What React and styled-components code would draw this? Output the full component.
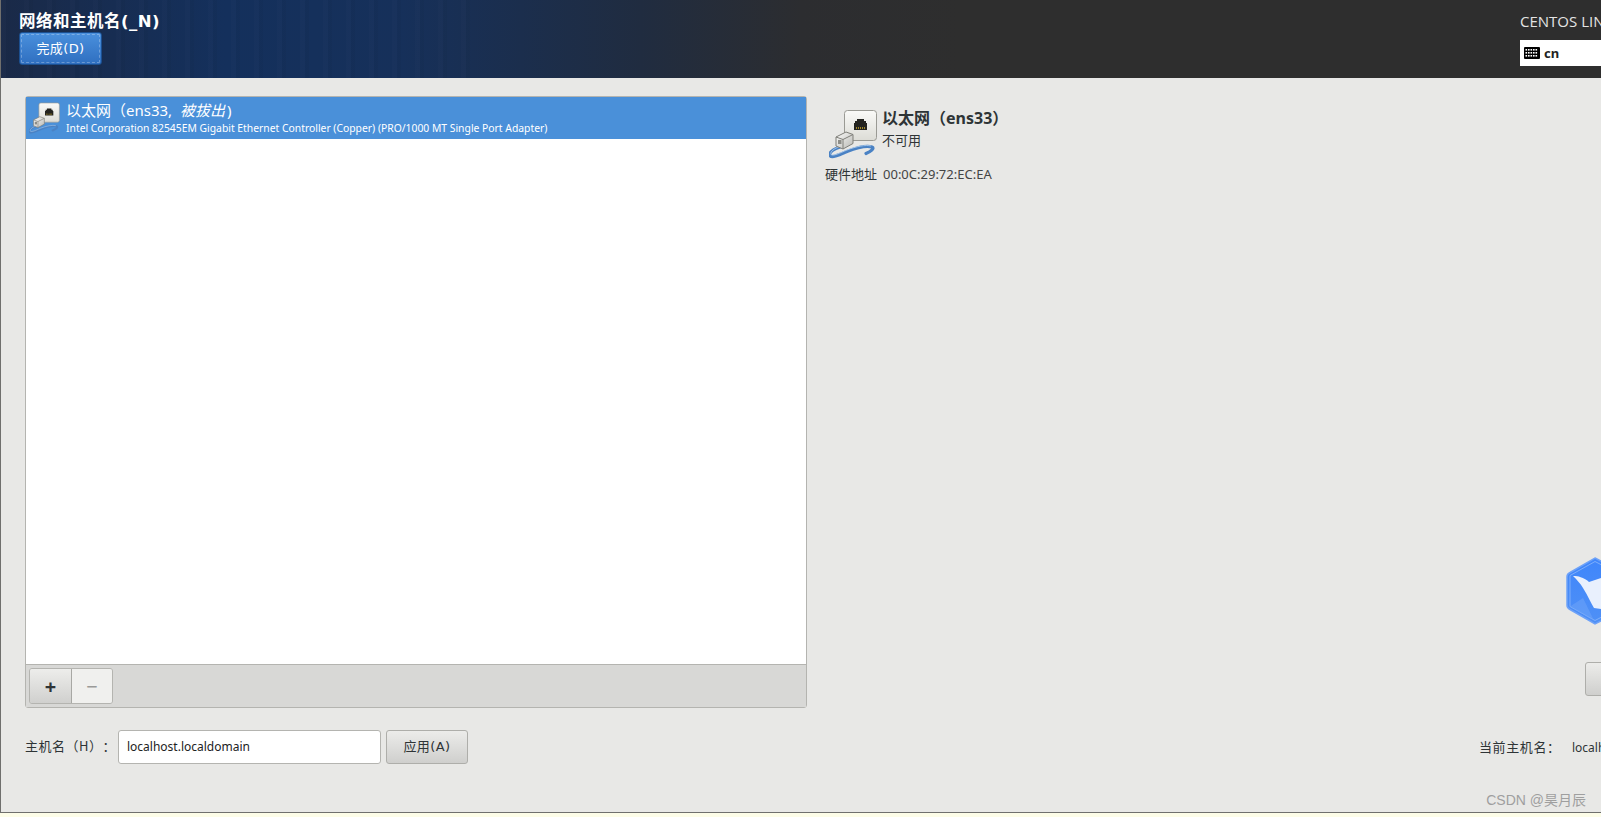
import styled, { createGlobalStyle } from "styled-components";
import { useState } from "react";

const GlobalStyle = createGlobalStyle`
  html, body {
    margin: 0;
    padding: 0;
    background: #fdfde8;
  }
  body {
    font-family: "Liberation Sans", "Noto Sans", "Noto Sans CJK SC", sans-serif;
    text-spacing-trim: space-all;
    overflow: hidden;
  }
  * {
    box-sizing: border-box;
  }
`;

function PortIcon({ small }) {
  const size = small ? 32 : 50;
  const plate = small ? "plateS" : "plateL";
  const plug = small ? "plugS" : "plugL";
  return (
    <svg width={size} height={size} viewBox="0 0 50 50">
      <defs>
        <linearGradient id={plate} x1="0" y1="0" x2="0" y2="1">
          <stop offset="0" stopColor="#fafaf8" />
          <stop offset="1" stopColor="#dcdcd6" />
        </linearGradient>
        <linearGradient id={plug} x1="0" y1="0" x2="1" y2="1">
          <stop offset="0" stopColor="#fbfbfa" />
          <stop offset="1" stopColor="#b9b9b4" />
        </linearGradient>
      </defs>
      <rect x="15.5" y="1.5" width="32" height="30" rx="3" fill={`url(#${plate})`} stroke="#9a9a94" />
      <path d="M28 10h7v2h2v2h1v7H25v-7h1v-2h2z" fill="#23231f" />
      <path d="M27 19h9" stroke="#c9a92c" strokeWidth="1.4" strokeDasharray="1 1" />
      <path d="M11 38C5 40 0 43 1 46.5c1.5 3 9-.5 17-4 9-3.5 20-6 25-4.5 3 1.2-1 4.5-6 6.5" fill="none" stroke="#4a82c4" strokeWidth="3.2" strokeLinecap="round" />
      <path d="M11 37.5C5 39.5 1 42.5 2 45.5c2 2 9-1.5 16-4.5 9-3.5 19-5.5 24-4" fill="none" stroke="#b5d0ee" strokeWidth="0.8" />
      <path d="M7 28l10-5 7 2.500v9L14 40l-7-3z" fill={`url(#${plug})`} stroke="#7f7f79" />
      <path d="M7 28l7 2.500V40M14 30.500l10-5" fill="none" stroke="#7f7f79" />
      <rect x="9" y="31" width="3.5" height="4" fill="#8d8d88" />
    </svg>
  );
}

function KeyboardIcon() {
  return (
    <svg width="16" height="12" viewBox="0 0 16 12">
      <rect width="16" height="12" rx="1" fill="#000" />
      {[2, 5, 8].map((y) =>
        [1.5, 4, 6.5, 9, 11.5].map((x) => (
          <rect key={`${x}-${y}`} x={x} y={y} width="1.6" height="1.6" fill="#fff" />
        ))
      )}
    </svg>
  );
}

function BirdBadge() {
  return (
    <svg width="70" height="68" viewBox="0 0 70 68">
      <defs>
        <linearGradient id="hexFill" x1="0" y1="0" x2="0" y2="1">
          <stop offset="0" stopColor="#3f86fb" />
          <stop offset="1" stopColor="#4f90f6" />
        </linearGradient>
      </defs>
      <path d="M29 1 58 16a5 5 0 0 1 3 5v26a5 5 0 0 1-3 5L29 67 4 52.500a5 5 0 0 1-3-5V20.500a5 5 0 0 1 3-5z" fill="url(#hexFill)" stroke="#6ea2f8" strokeWidth="1.5" />
      <path d="M29 4.500 56 18.500V49.500L29 63.500 4 49.500V18.500z" fill="none" stroke="#8db8fa" strokeWidth="0.8" />
      <path d="M4 49.500 17 41l11 22.500z" fill="#6aa2f8" opacity="0.6" />
      <path d="M7 19c3 0 6 0 7 1 4 1 7 3 9 5 4-1 8-3 12-4 6 0 12 4 16 9v24L36 52l-8-1c-3-5-6-12-11-20-3-5-6-8-10-12z" fill="#e9f0fd" />
    </svg>
  );
}

export default function App() {
  const [hostname, setHostname] = useState("localhost.localdomain");

  return (
    <>
      <GlobalStyle />
      <Screen>
        <Header>
          <HeaderLeft>
            <PageTitle>网络和主机名(_N)</PageTitle>
            <DoneButton>完成(D)</DoneButton>
          </HeaderLeft>
          <HeaderRight>
            <ProductName>CENTOS LINUX 7 安装</ProductName>
            <KeyboardBox>
              <KeyboardIcon />
              <span>cn</span>
            </KeyboardBox>
          </HeaderRight>
        </Header>

        <Content>
          <Columns>
            <ListPanel>
              <DeviceList>
                <DeviceRow>
                  <PortIcon small />
                  <DeviceText>
                    <DeviceName>
                      以太网（ens33, <em>被拔出</em>)
                    </DeviceName>
                    <DeviceModel>
                      Intel Corporation 82545EM Gigabit Ethernet Controller (Copper) (PRO/1000 MT Single Port Adapter)
                    </DeviceModel>
                  </DeviceText>
                </DeviceRow>
              </DeviceList>
              <ListToolbar>
                <ToolGroup>
                  <ToolButton>+</ToolButton>
                  <ToolButton $disabled>−</ToolButton>
                </ToolGroup>
              </ListToolbar>
            </ListPanel>

            <DetailPanel>
              <DetailHead>
                <PortIcon />
                <div>
                  <DetailTitle>以太网（ens33）</DetailTitle>
                  <DetailStatus>不可用</DetailStatus>
                </div>
              </DetailHead>
              <DetailRow>
                <DetailLabel>硬件地址</DetailLabel>
                <DetailValue>00:0C:29:72:EC:EA</DetailValue>
              </DetailRow>
              <ConfigureRow>
                <GreyButton $wide>配置(O)...</GreyButton>
              </ConfigureRow>
            </DetailPanel>
          </Columns>

          <HostRow>
            <HostLeft>
              <HostLabel>主机名（H）：</HostLabel>
              <HostInput value={hostname} onChange={(e) => setHostname(e.target.value)} />
              <GreyButton>应用(A)</GreyButton>
            </HostLeft>
            <HostRight>
              <CurrentLabel>当前主机名：</CurrentLabel>
              <span>localhost.localdomain</span>
            </HostRight>
          </HostRow>

          <BadgeSpot>
            <BirdBadge />
          </BadgeSpot>
          <Watermark>CSDN @昊月辰</Watermark>
        </Content>
      </Screen>
    </>
  );
}

const Screen = styled.div`
  width: 1601px;
  height: 813px;
  display: flex;
  flex-direction: column;
  overflow: hidden;
  background: #e8e8e6;
  border-left: 1px solid #6f6f6d;
  border-bottom: 1px solid #6f6f6d;
`;

const Header = styled.header`
  height: 78px;
  flex: none;
  display: flex;
  justify-content: space-between;
  color: #fff;
  background:
    repeating-linear-gradient(90deg, rgba(255, 255, 255, 0.012) 0 5px, rgba(0, 0, 0, 0.03) 5px 9px, transparent 9px 23px) 0 0 / 480px 100% no-repeat,
    linear-gradient(90deg, #1a2a48 0%, #14305c 14%, #16305a 25%, #202c40 40%, #2c2d30 50%, #2e2e2e 60%, #2e2e2e 100%);
`;

const HeaderLeft = styled.div`
  padding: 11px 0 0 18px;
`;

const PageTitle = styled.h1`
  margin: 0;
  height: 22px;
  font-family: "DejaVu Sans", "Noto Sans CJK SC", sans-serif;
  font-size: 16.5px;
  line-height: 22px;
  font-weight: 700;
  letter-spacing: 0.5px;
  white-space: nowrap;
`;

const DoneButton = styled.button`
  display: block;
  width: 83px;
  height: 33px;
  margin-top: -1px;
  padding: 0 0 3px;
  font-family: "DejaVu Sans", "Noto Sans CJK SC", sans-serif;
  font-size: 13px;
  letter-spacing: 0.4px;
  color: #fff;
  border: 1px solid #1c4f8f;
  border-radius: 3px;
  outline: 1px dashed rgba(255, 255, 255, 0.28);
  outline-offset: -3px;
  background: linear-gradient(180deg, #4a90dd 0%, #2f6fc0 100%);
`;

const HeaderRight = styled.div`
  width: 81px;
  flex: none;
  padding-top: 11px;
  white-space: nowrap;
`;

const ProductName = styled.div`
  height: 29px;
  font-family: "Open Sans", "Noto Sans", "Noto Sans CJK SC", sans-serif;
  font-size: 15px;
  line-height: 20px;
  color: #e4e4e4;
`;

const KeyboardBox = styled.div`
  width: 81px;
  height: 26px;
  display: flex;
  align-items: center;
  gap: 4px;
  padding-left: 4px;
  background: #fff;
  color: #222;
  font-family: "Noto Sans", sans-serif;
  font-size: 13px;
  font-weight: 700;
`;

const Content = styled.main`
  position: relative;
  flex: 1;
  min-height: 0;
  padding: 18px 0 0 24px;
`;

const Columns = styled.div`
  display: flex;
  height: 612px;
`;

const ListPanel = styled.section`
  width: 782px;
  flex: none;
  display: flex;
  flex-direction: column;
  border: 1px solid #b4b4b0;
  border-radius: 3px;
`;

const DeviceList = styled.div`
  flex: 1;
  background: #fff;
  border-bottom: 1px solid #b4b4b0;
`;

const DeviceRow = styled.div`
  height: 42px;
  display: flex;
  align-items: center;
  gap: 5px;
  padding-left: 3px;
  background: #4a90d9;
  color: #fff;
`;

const DeviceText = styled.div`
  display: flex;
  flex-direction: column;
  padding-bottom: 2px;
`;

const DeviceName = styled.div`
  font-family: "Noto Sans", "Noto Sans CJK SC", sans-serif;
  font-size: 15px;
  line-height: 21px;
  word-spacing: 4px;
  em {
    font-style: italic;
    margin-right: 2px;
  }
`;

const DeviceModel = styled.div`
  font-family: "Noto Sans", sans-serif;
  font-size: 10.35px;
  line-height: 14px;
`;

const ListToolbar = styled.div`
  height: 42px;
  flex: none;
  padding: 3px;
  background: #d8d8d6;
`;

const ToolGroup = styled.div`
  display: inline-flex;
  height: 36px;
  border: 1px solid #b4b4b0;
  border-radius: 3px;
  overflow: hidden;
`;

const ToolButton = styled.button`
  width: ${(p) => (p.$disabled ? "40px" : "42px")};
  padding: 0;
  border: 0;
  font-family: "Noto Sans", sans-serif;
  font-size: 20px;
  font-weight: ${(p) => (p.$disabled ? 400 : 700)};
  color: ${(p) => (p.$disabled ? "#9a9a98" : "#2e3436")};
  background: ${(p) => (p.$disabled ? "#f0f0ee" : "linear-gradient(180deg, #ededeb, #d0d0ce)")};
  border-right: ${(p) => (p.$disabled ? "0" : "1px solid #a8a8a4")};
`;

const DetailPanel = styled.section`
  width: 900px;
  flex: none;
  display: flex;
  flex-direction: column;
  padding: 13px 0 0 18px;
`;

const DetailHead = styled.div`
  display: flex;
  gap: 3px;
  margin-left: 4px;
  height: 55px;
`;

const DetailTitle = styled.div`
  margin-top: -1px;
  font-family: "Noto Sans", "Noto Sans CJK SC", sans-serif;
  font-size: 16px;
  font-weight: 700;
  line-height: 20px;
  color: #2e3436;
`;

const DetailStatus = styled.div`
  margin-top: 2px;
  font-family: "Noto Sans CJK SC", sans-serif;
  font-size: 13px;
  line-height: 20px;
  color: #2e3436;
`;

const DetailRow = styled.div`
  display: flex;
  gap: 6px;
  margin-top: 1px;
  font-size: 13px;
  line-height: 18px;
  color: #2e3436;
`;

const DetailLabel = styled.span`
  font-family: "Noto Sans CJK SC", sans-serif;
`;

const DetailValue = styled.span`
  font-family: "Noto Sans", sans-serif;
  color: #444;
`;

const ConfigureRow = styled.div`
  margin-top: auto;
  margin-bottom: 12px;
  padding-left: 760px;
`;

const GreyButton = styled.button`
  width: ${(p) => (p.$wide ? "100px" : "82px")};
  height: 34px;
  padding: 0 0 3px;
  flex: none;
  font-family: "DejaVu Sans", "Noto Sans CJK SC", sans-serif;
  font-size: 13px;
  letter-spacing: 0.4px;
  color: #2e3436;
  border: 1px solid #aeaeaa;
  border-radius: 3px;
  background: linear-gradient(180deg, #ececea, #cfcfcd);
`;

const HostRow = styled.div`
  display: flex;
  justify-content: space-between;
  align-items: center;
  width: 1680px;
  margin-top: 22px;
  height: 34px;
`;

const HostLeft = styled.div`
  display: flex;
  align-items: center;
  gap: 5px;
`;

const HostLabel = styled.label`
  width: 88px;
  padding-bottom: 4px;
  font-family: "Noto Sans CJK SC", sans-serif;
  font-size: 13px;
  letter-spacing: 0.5px;
  white-space: nowrap;
  color: #2e3436;
`;

const HostInput = styled.input`
  width: 263px;
  height: 34px;
  padding: 0 8px 2px;
  font-family: "Noto Sans", sans-serif;
  font-size: 12px;
  color: #222;
  border: 1px solid #b4b4b0;
  border-radius: 3px;
  background: #fff;
  outline: none;
`;

const HostRight = styled.div`
  display: flex;
  width: 226px;
  flex: none;
  font-family: "Noto Sans", sans-serif;
  font-size: 12px;
  color: #2e3436;
  white-space: nowrap;
`;

const CurrentLabel = styled.span`
  width: 93px;
  flex: none;
  margin-top: -2px;
  font-family: "Noto Sans CJK SC", sans-serif;
  font-size: 13px;
  letter-spacing: 0.6px;
`;

const BadgeSpot = styled.div`
  position: absolute;
  left: 1565px;
  top: 479px;
`;

const Watermark = styled.div`
  position: absolute;
  right: 15px;
  bottom: 3px;
  font-family: "Liberation Sans", "Noto Sans CJK SC", sans-serif;
  font-size: 14px;
  color: #9f9f9f;
`;
